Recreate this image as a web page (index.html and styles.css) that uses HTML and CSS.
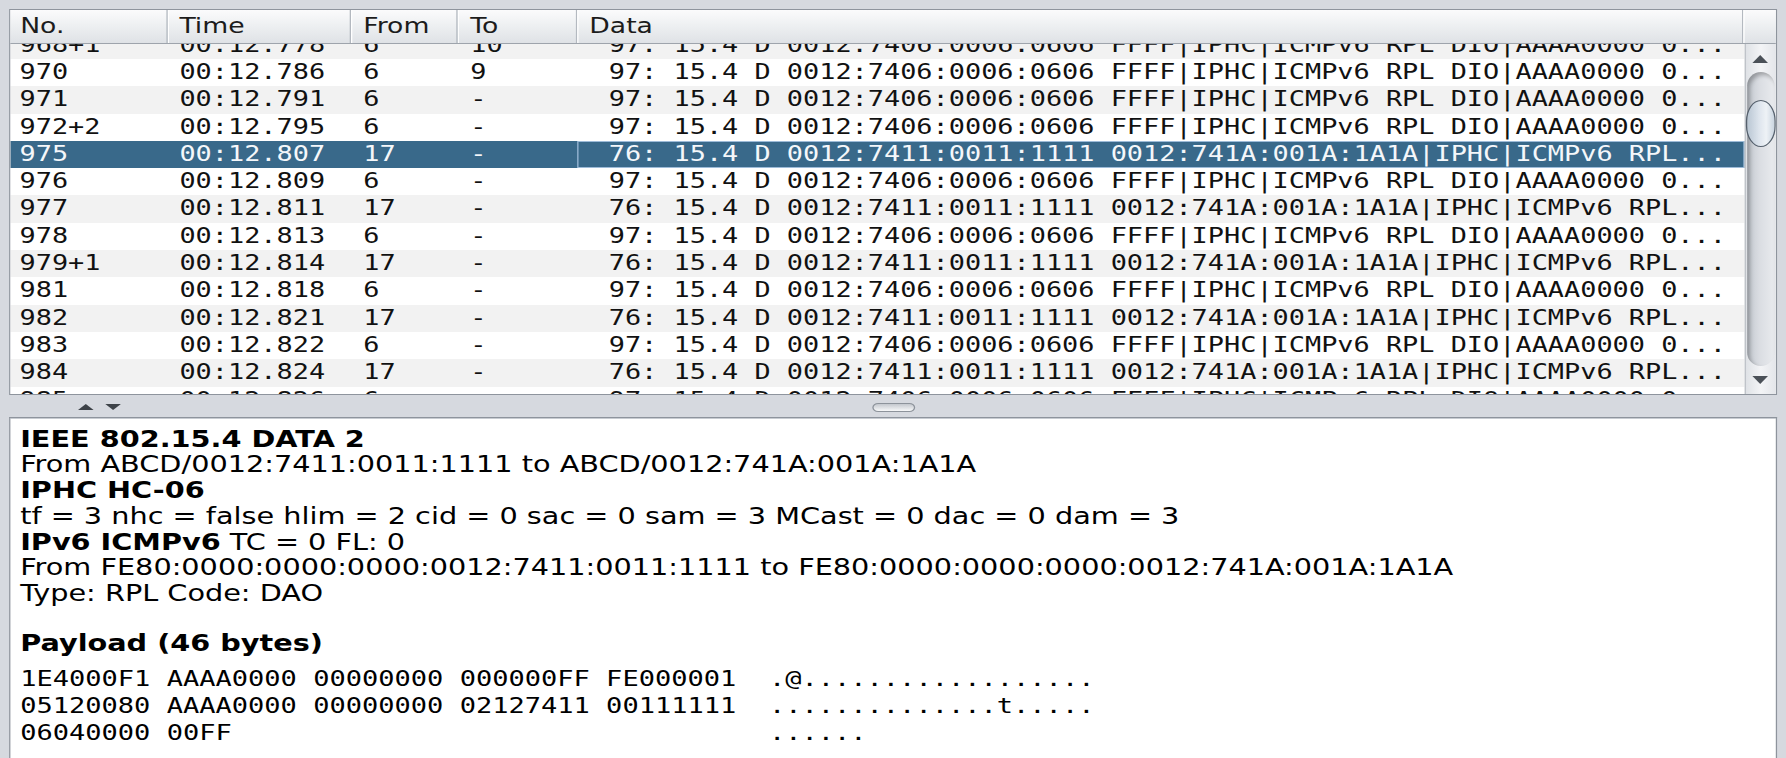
FILE: index.html
```html
<!DOCTYPE html>
<html>
<head>
<meta charset="utf-8">
<link rel="stylesheet" href="styles.css">
</head>
<body>
<div class="app">
  <div class="table-pane">
    <div class="thead">
      <div class="th first">No.</div>
      <div class="th">Time</div>
      <div class="th">From</div>
      <div class="th">To</div>
      <div class="th">Data</div>
      <div class="th corner"></div>
    </div>
    <div class="tbody">
      <div class="viewport">
        <div class="rows">
          <div class="row"><div class="td first">968+1</div><div class="td">00:12.778</div><div class="td">6</div><div class="td">10</div><div class="td data"> 97: 15.4 D 0012:7406:0006:0606 FFFF|IPHC|ICMPv6 RPL DIO|AAAA0000 0...</div></div>
          <div class="row"><div class="td first">970</div><div class="td">00:12.786</div><div class="td">6</div><div class="td">9</div><div class="td data"> 97: 15.4 D 0012:7406:0006:0606 FFFF|IPHC|ICMPv6 RPL DIO|AAAA0000 0...</div></div>
          <div class="row"><div class="td first">971</div><div class="td">00:12.791</div><div class="td">6</div><div class="td">-</div><div class="td data"> 97: 15.4 D 0012:7406:0006:0606 FFFF|IPHC|ICMPv6 RPL DIO|AAAA0000 0...</div></div>
          <div class="row"><div class="td first">972+2</div><div class="td">00:12.795</div><div class="td">6</div><div class="td">-</div><div class="td data"> 97: 15.4 D 0012:7406:0006:0606 FFFF|IPHC|ICMPv6 RPL DIO|AAAA0000 0...</div></div>
          <div class="row sel"><div class="td first">975</div><div class="td">00:12.807</div><div class="td">17</div><div class="td">-</div><div class="td data focus"> 76: 15.4 D 0012:7411:0011:1111 0012:741A:001A:1A1A|IPHC|ICMPv6 RPL...</div></div>
          <div class="row"><div class="td first">976</div><div class="td">00:12.809</div><div class="td">6</div><div class="td">-</div><div class="td data"> 97: 15.4 D 0012:7406:0006:0606 FFFF|IPHC|ICMPv6 RPL DIO|AAAA0000 0...</div></div>
          <div class="row"><div class="td first">977</div><div class="td">00:12.811</div><div class="td">17</div><div class="td">-</div><div class="td data"> 76: 15.4 D 0012:7411:0011:1111 0012:741A:001A:1A1A|IPHC|ICMPv6 RPL...</div></div>
          <div class="row"><div class="td first">978</div><div class="td">00:12.813</div><div class="td">6</div><div class="td">-</div><div class="td data"> 97: 15.4 D 0012:7406:0006:0606 FFFF|IPHC|ICMPv6 RPL DIO|AAAA0000 0...</div></div>
          <div class="row"><div class="td first">979+1</div><div class="td">00:12.814</div><div class="td">17</div><div class="td">-</div><div class="td data"> 76: 15.4 D 0012:7411:0011:1111 0012:741A:001A:1A1A|IPHC|ICMPv6 RPL...</div></div>
          <div class="row"><div class="td first">981</div><div class="td">00:12.818</div><div class="td">6</div><div class="td">-</div><div class="td data"> 97: 15.4 D 0012:7406:0006:0606 FFFF|IPHC|ICMPv6 RPL DIO|AAAA0000 0...</div></div>
          <div class="row"><div class="td first">982</div><div class="td">00:12.821</div><div class="td">17</div><div class="td">-</div><div class="td data"> 76: 15.4 D 0012:7411:0011:1111 0012:741A:001A:1A1A|IPHC|ICMPv6 RPL...</div></div>
          <div class="row"><div class="td first">983</div><div class="td">00:12.822</div><div class="td">6</div><div class="td">-</div><div class="td data"> 97: 15.4 D 0012:7406:0006:0606 FFFF|IPHC|ICMPv6 RPL DIO|AAAA0000 0...</div></div>
          <div class="row"><div class="td first">984</div><div class="td">00:12.824</div><div class="td">17</div><div class="td">-</div><div class="td data"> 76: 15.4 D 0012:7411:0011:1111 0012:741A:001A:1A1A|IPHC|ICMPv6 RPL...</div></div>
          <div class="row"><div class="td first">985</div><div class="td">00:12.826</div><div class="td">6</div><div class="td">-</div><div class="td data"> 97: 15.4 D 0012:7406:0006:0606 FFFF|IPHC|ICMPv6 RPL DIO|AAAA0000 0...</div></div>
        </div>
      </div>
      <div class="vscroll">
        <div class="sb-btn up"><span class="tri-up"></span></div>
        <div class="trough"><div class="thumb"></div></div>
        <div class="sb-btn down"><span class="tri-down"></span></div>
      </div>
    </div>
  </div>
  <div class="divider">
    <div class="arrows"><span class="d-up"></span><span class="d-down"></span></div>
    <div class="grip"></div>
    <div></div>
  </div>
  <div class="detail-pane">
    <div class="line"><b>IEEE 802.15.4 DATA 2</b></div>
    <div class="line">From ABCD/0012:7411:0011:1111 to ABCD/0012:741A:001A:1A1A</div>
    <div class="line"><b>IPHC HC-06</b></div>
    <div class="line">tf = 3 nhc = false hlim = 2 cid = 0 sac = 0 sam = 3 MCast = 0 dac = 0 dam = 3</div>
    <div class="line"><b>IPv6 ICMPv6</b> TC = 0 FL: 0</div>
    <div class="line">From FE80:0000:0000:0000:0012:7411:0011:1111 to FE80:0000:0000:0000:0012:741A:001A:1A1A</div>
    <div class="line">Type: RPL Code: DAO</div>
    <div class="line blank">&nbsp;</div>
    <div class="line"><b>Payload (46 bytes)</b></div>
    <div class="hex">1E4000F1 AAAA0000 00000000 000000FF FE000001  .@..................
05120080 AAAA0000 00000000 02127411 00111111  ..............t.....
06040000 00FF                                 ......</div>
  </div>
</div>
</body>
</html>
```
FILE: styles.css
```css
html, body {
  margin: 0;
  padding: 0;
  background: #d6d9df;
  overflow: hidden;
}

.app {
  width: 1373.85px;
  height: 758px;
  box-sizing: border-box;
  padding: 9px 6.85px 0 7px;
  transform: scaleX(1.3);
  transform-origin: 0 0;
  display: flex;
  flex-direction: column;
  font-family: "DejaVu Sans", sans-serif;
  color: #000;
}

.table-pane {
  height: 386px;
  flex: none;
  box-sizing: border-box;
  border: 1px solid #8e949d;
  background: #fff;
  display: flex;
  flex-direction: column;
}

.thead {
  height: 34px;
  flex: none;
  display: grid;
  grid-template-columns: 120.5px 141.5px 82.3px 91.5px 897.7px 1fr;
  background: linear-gradient(#fbfbfc 0%, #eef0f2 45%, #dfe2e6 100%);
  border-bottom: 1px solid #9ea4ac;
  box-sizing: border-box;
}

.th {
  font-size: 20.5px;
  line-height: 33px;
  color: #1c1c1c;
  padding-left: 9.5px;
  border-right: 1px solid #b4b9c0;
  box-shadow: inset 1px 0 0 #ffffff;
  white-space: nowrap;
  overflow: hidden;
}

.th.first {
  padding-left: 7.5px;
  box-shadow: none;
}

.th.corner {
  border-right: none;
}

.tbody {
  flex: 1;
  display: flex;
  overflow: hidden;
}

.viewport {
  flex: 1;
  overflow: hidden;
}

.rows {
  margin-top: -12.3px;
}

.row {
  display: grid;
  grid-template-columns: 120.5px 141.5px 82.3px 91.5px 1fr;
  height: 27.3px;
  line-height: 27.3px;
  font-family: "DejaVu Sans Mono", monospace;
  font-size: 20.7px;
  color: #111;
  background: #fff;
}

.row:nth-child(odd) {
  background: #f2f2f2;
}

.row.sel {
  background: #39698a;
  color: #f4f7fa;
}

.td {
  padding-left: 9.5px;
  white-space: pre;
  overflow: hidden;
}

.td.first {
  padding-left: 7px;
}

.td.data {
  padding-left: 12px;
}

.td.focus {
  box-shadow: inset 0 0 0 1px #9dbbd8;
}

.vscroll {
  width: 24.5px;
  flex: none;
  display: flex;
  flex-direction: column;
  background: linear-gradient(90deg, #dfe2e6, #f3f4f6 50%, #e4e6ea);
  border-left: 1px solid #b8bdc4;
  box-sizing: border-box;
}

.sb-btn {
  flex: none;
  display: flex;
  justify-content: center;
  align-items: center;
}

.sb-btn.up {
  height: 28px;
  padding-top: 2px;
  box-sizing: border-box;
}

.sb-btn.down {
  height: 28px;
}

.tri-up {
  width: 0;
  height: 0;
  border-left: 6px solid transparent;
  border-right: 6px solid transparent;
  border-bottom: 8px solid #4b5158;
}

.tri-down {
  width: 0;
  height: 0;
  border-left: 6px solid transparent;
  border-right: 6px solid transparent;
  border-top: 8px solid #4b5158;
}

.trough {
  flex: 1;
  margin: 0 1px;
  border-radius: 11px / 14px;
  background: linear-gradient(90deg, #c3c8cf, #dadde2 45%, #e9ebee);
  box-shadow: inset 2px 3px 4px rgba(0, 0, 0, 0.28);
  padding-top: 28px;
  box-sizing: border-box;
}

.thumb {
  height: 47px;
  margin: 0 -1px;
  border: 1px solid #56616d;
  border-radius: 12px / 22px;
  background: linear-gradient(90deg, #b9c6d3, #dfe6ee 45%, #eef2f6 70%, #c9d4df);
  box-sizing: border-box;
}

.divider {
  height: 22px;
  flex: none;
  display: grid;
  grid-template-columns: 1fr 33px 1fr;
  align-items: center;
  padding-top: 2px;
  box-sizing: border-box;
}

.arrows {
  display: flex;
  gap: 9px;
  padding-left: 53px;
  align-items: center;
}

.d-up {
  width: 0;
  height: 0;
  border-left: 6px solid transparent;
  border-right: 6px solid transparent;
  border-bottom: 6px solid #3d4248;
}

.d-down {
  width: 0;
  height: 0;
  border-left: 6px solid transparent;
  border-right: 6px solid transparent;
  border-top: 6px solid #3d4248;
}

.grip {
  height: 9px;
  border: 1px solid #8d939b;
  border-radius: 5px;
  background: linear-gradient(#c4c8ce, #f7f8f9);
  box-sizing: border-box;
}

.detail-pane {
  flex: 1;
  background: #fff;
  border: 1px solid #8e949d;
  border-bottom: none;
  box-shadow: inset 0 1px 0 #c8ccd2;
  padding: 8.5px 0 0 7.5px;
  font-size: 22.1px;
  line-height: 25.8px;
}

.line {
  white-space: nowrap;
}

.line.blank {
  height: 23.5px;
}

.line b {
  font-weight: bold;
}

.hex {
  margin-top: 10px;
  font-family: "DejaVu Sans Mono", monospace;
  font-size: 20.8px;
  line-height: 26.6px;
  white-space: pre;
}
```
